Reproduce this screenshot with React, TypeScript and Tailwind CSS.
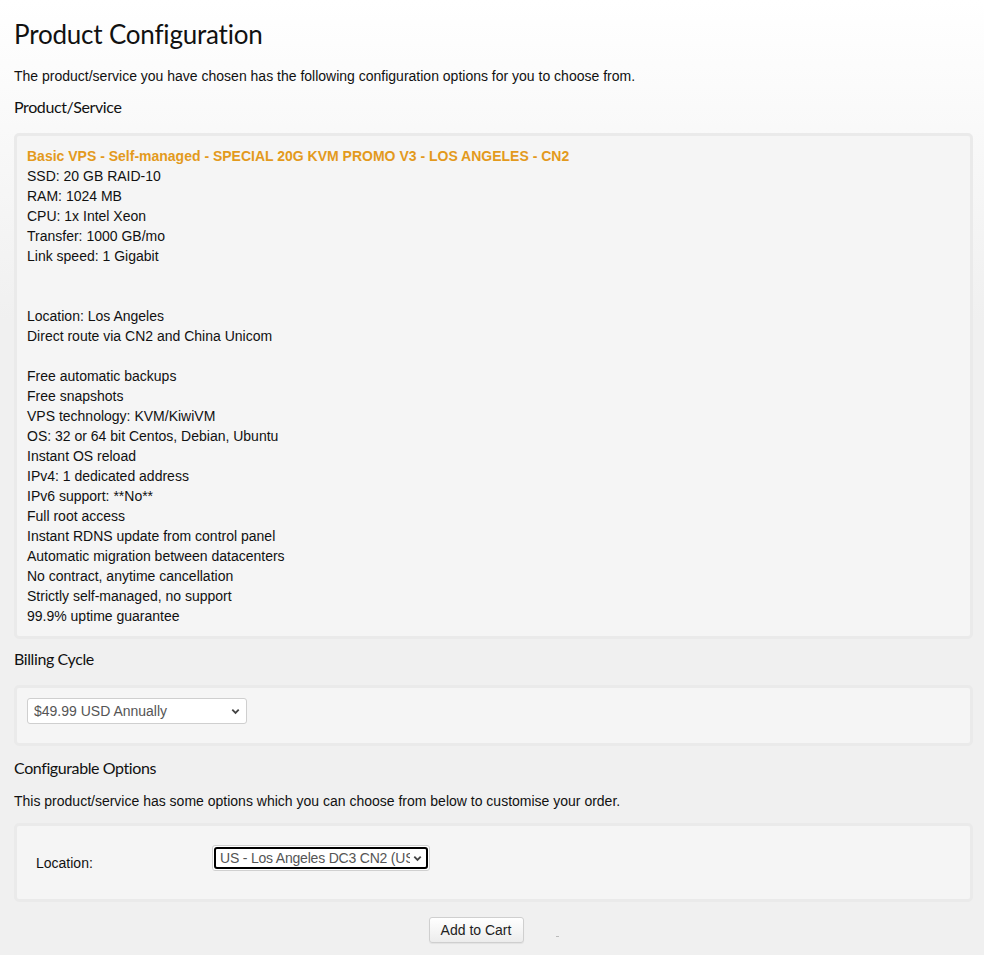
import { useState } from 'react'

const features = [
  'SSD: 20 GB RAID-10',
  'RAM: 1024 MB',
  'CPU: 1x Intel Xeon',
  'Transfer: 1000 GB/mo',
  'Link speed: 1 Gigabit',
  '',
  '',
  'Location: Los Angeles',
  'Direct route via CN2 and China Unicom',
  '',
  'Free automatic backups',
  'Free snapshots',
  'VPS technology: KVM/KiwiVM',
  'OS: 32 or 64 bit Centos, Debian, Ubuntu',
  'Instant OS reload',
  'IPv4: 1 dedicated address',
  'IPv6 support: **No**',
  'Full root access',
  'Instant RDNS update from control panel',
  'Automatic migration between datacenters',
  'No contract, anytime cancellation',
  'Strictly self-managed, no support',
  '99.9% uptime guarantee',
]

const heading = "font-['Lato','Open_Sans',sans-serif] text-[#111]"
const subHeading = `${heading} text-[16px] leading-[22px] tracking-[-0.4px]`

function Chevron() {
  return (
    <svg
      viewBox="0 0 12 12"
      className="pointer-events-none absolute right-[6px] top-1/2 h-[11px] w-[11px] -translate-y-1/2"
      fill="none"
      stroke="#444"
      strokeWidth="2"
    >
      <path d="M2.5 4.5 6 8l3.5-3.5" />
    </svg>
  )
}

function Box({ className = '', children }: { className?: string; children: React.ReactNode }) {
  return (
    <div className={`rounded-[5px] border-[3px] border-[#eaeaea] bg-[#f5f5f5] ${className}`}>
      {children}
    </div>
  )
}

export default function App() {
  const [cycle, setCycle] = useState('annually')
  const [location, setLocation] = useState('la-dc3')

  return (
    <main className="min-h-screen bg-[#efefef] bg-[linear-gradient(to_bottom,#ffffff_0px,#f0f0f0_320px)] font-['Liberation_Sans',Arial,sans-serif] text-[14px] text-[#111]">
      <div className="ml-[14px] mr-[11px] pb-[12px]">
        {/* Page title */}
        <h1 className={`${heading} pt-[16px] text-[26px] leading-[36px] tracking-[-0.2px]`}>
          Product Configuration
        </h1>
        <p className="mt-[14px] leading-[20px]">
          The product/service you have chosen has the following configuration options for you to choose from.
        </p>

        {/* Product/Service */}
        <h2 className={`${subHeading} mt-[10px]`}>Product/Service</h2>
        <Box className="mt-[15px] px-[10px] pb-[10px] pt-[10px]">
          <div className="font-bold leading-[20px] text-[#e39a1d]">
            Basic VPS - Self-managed - SPECIAL 20G KVM PROMO V3 - LOS ANGELES - CN2
          </div>
          {features.map((f, i) => (
            <div key={i} className="h-[20px] leading-[20px]">
              {f}
            </div>
          ))}
        </Box>

        {/* Billing Cycle */}
        <h2 className={`${subHeading} mt-[9px]`}>Billing Cycle</h2>
        <Box className="mt-[15px] px-[10px] pb-[19px] pt-[10px]">
          <div className="relative w-[220px]">
            <select
              value={cycle}
              onChange={(e) => setCycle(e.target.value)}
              className="block h-[26px] w-full appearance-none rounded-[3px] border border-[#cfcfcf] bg-white pl-[6px] pr-[22px] text-[14px] leading-[24px] text-[#555] outline-none"
            >
              <option value="annually">$49.99 USD Annually</option>
            </select>
            <Chevron />
          </div>
        </Box>

        {/* Configurable Options */}
        <h2 className={`${subHeading} mt-[11px]`}>Configurable Options</h2>
        <p className="mt-[12px] leading-[20px]">
          This product/service has some options which you can choose from below to customise your order.
        </p>
        <Box className="mt-[12px] pb-[26px] pl-[19px] pt-[19px]">
          <div className="flex items-start">
            <label className="w-[176px] pt-[8px] leading-[20px]">Location:</label>
            <div className="relative w-[218px] rounded-[3px] border border-[#d0d0d0] bg-white p-[1px]">
              <select
                value={location}
                onChange={(e) => setLocation(e.target.value)}
                className="block h-[22px] w-full appearance-none overflow-hidden rounded-[3px] border-2 border-black bg-white pl-[4px] pr-[16px] text-[14px] leading-[18px] tracking-[-0.2px] text-[#555] outline-none"
              >
                <option value="la-dc3">US - Los Angeles DC3 CN2 (USCA_3)</option>
              </select>
              <Chevron />
            </div>
          </div>
        </Box>

        {/* Submit */}
        <div className="mt-[15px] flex items-center justify-center gap-[32px]">
          <button className="h-[26px] w-[95px] rounded-[3px] border border-[#cfcfcf] bg-[linear-gradient(to_bottom,#ffffff,#ececec)] text-[14px] text-[#222] shadow-[0_1px_1px_rgba(0,0,0,0.06)]">
            Add to Cart
          </button>
          <span className="mt-[12px] h-[1px] w-[3px] bg-[#bbb]" />
        </div>
      </div>
    </main>
  )
}
